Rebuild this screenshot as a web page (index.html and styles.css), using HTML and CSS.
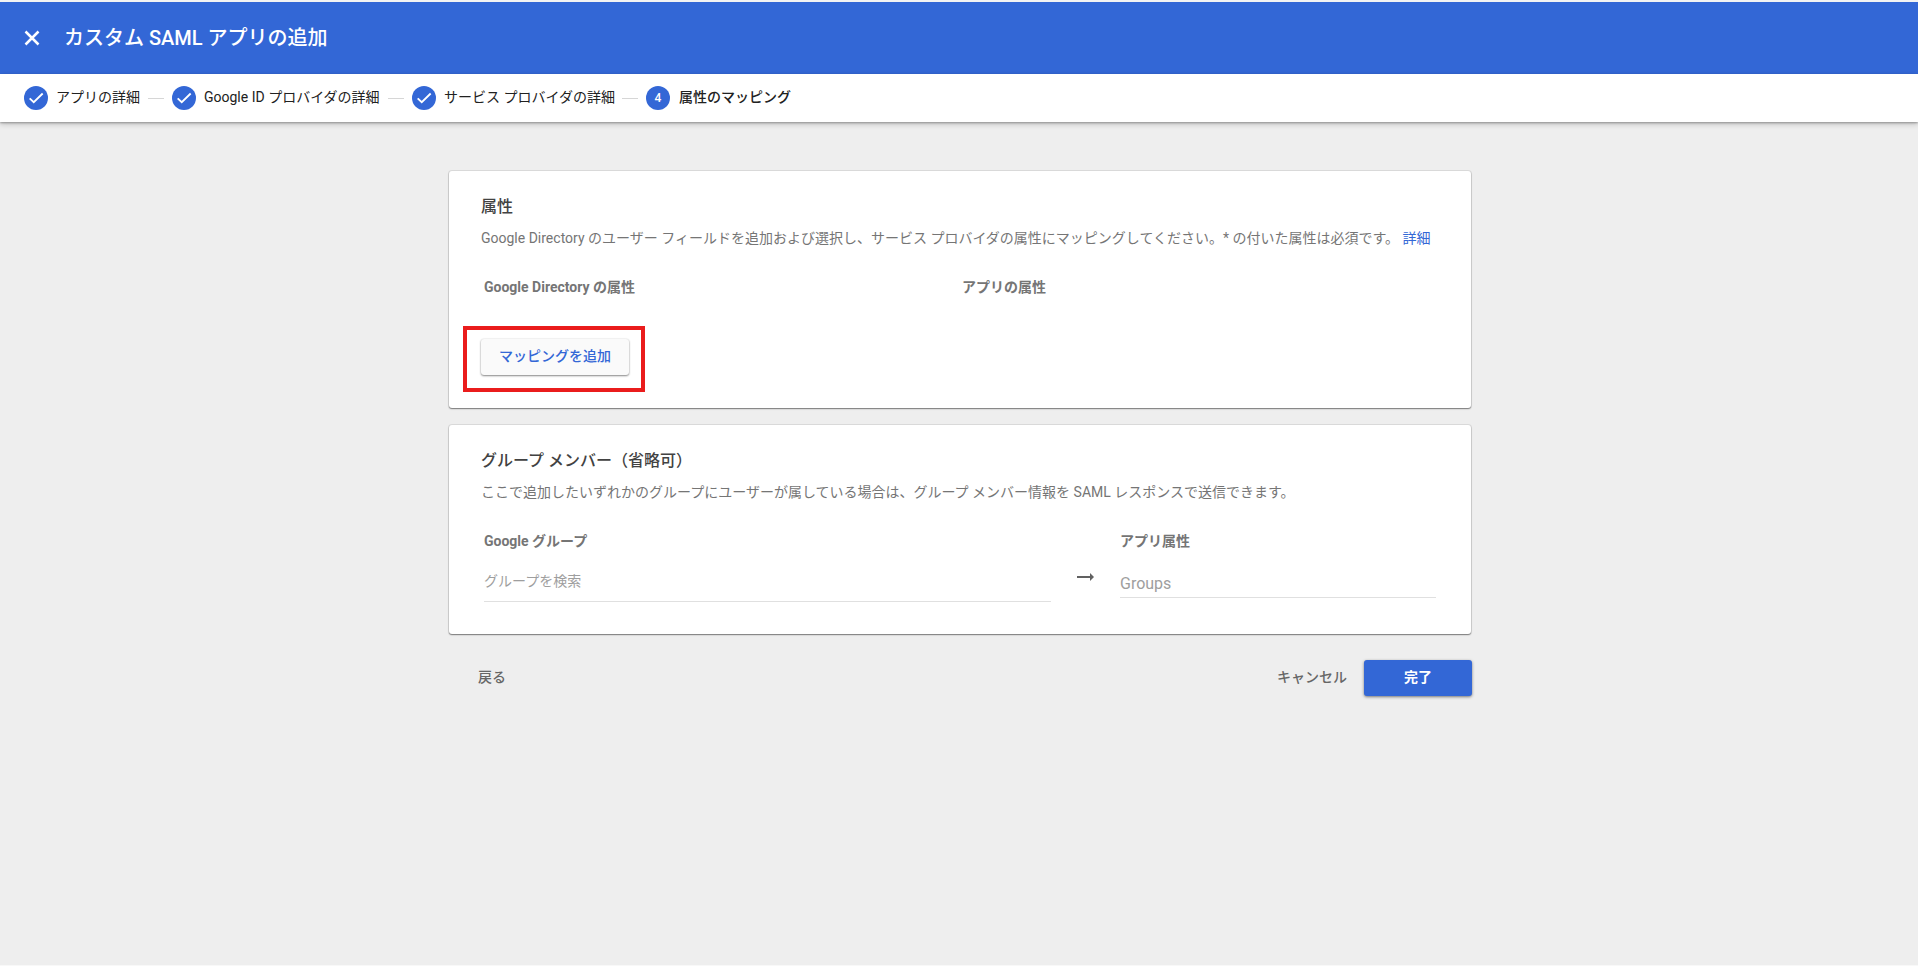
FILE: index.html
```html
<!DOCTYPE html>
<html lang="ja">
<head>
<meta charset="utf-8">
<title>カスタム SAML アプリの追加</title>
<link rel="stylesheet" href="styles.css">
</head>
<body>
<header class="topbar">
  <svg class="close" viewBox="0 0 16 16"><path d="M1.5 1.5l13 13M14.5 1.5l-13 13"/></svg>
  <h1 class="topbar-title">カスタム SAML アプリの追加</h1>
</header>
<nav class="steps">
  <span class="badge"><svg class="check" viewBox="0 0 24 24"><path d="M4.4 12.4l4.9 4.7L20 6.6"/></svg></span>
  <span class="step step-1">アプリの詳細</span>
  <span class="dash"></span>
  <span class="badge"><svg class="check" viewBox="0 0 24 24"><path d="M4.4 12.4l4.9 4.7L20 6.6"/></svg></span>
  <span class="step step-2">Google ID プロバイダの詳細</span>
  <span class="dash"></span>
  <span class="badge"><svg class="check" viewBox="0 0 24 24"><path d="M4.4 12.4l4.9 4.7L20 6.6"/></svg></span>
  <span class="step step-3">サービス プロバイダの詳細</span>
  <span class="dash"></span>
  <span class="badge">4</span>
  <span class="step current">属性のマッピング</span>
</nav>
<main class="content">
  <section class="card attributes">
    <h2 class="card-title">属性</h2>
    <p class="desc">Google Directory のユーザー フィールドを追加および選択し、サービス プロバイダの属性にマッピングしてください。* の付いた属性は必須です。 <a class="link">詳細</a></p>
    <div class="columns">
      <span class="label">Google Directory の属性</span>
      <span class="label">アプリの属性</span>
    </div>
    <div class="highlight"><button class="btn add">マッピングを追加</button></div>
  </section>
  <section class="card groups">
    <h2 class="card-title">グループ メンバー（省略可）</h2>
    <p class="desc">ここで追加したいずれかのグループにユーザーが属している場合は、グループ メンバー情報を SAML レスポンスで送信できます。</p>
    <div class="mapping">
      <div class="field">
        <span class="label">Google グループ</span>
        <div class="input search">グループを検索</div>
      </div>
      <svg class="arrow" viewBox="0 0 17 10"><path d="M0 4h13V1l4 4-4 4V6H0z"/></svg>
      <div class="field">
        <span class="label">アプリ属性</span>
        <div class="input name">Groups</div>
      </div>
    </div>
  </section>
  <footer class="actions">
    <button class="btn text back">戻る</button>
    <button class="btn text cancel">キャンセル</button>
    <button class="btn done">完了</button>
  </footer>
</main>
</body>
</html>
```
FILE: styles.css
```css
* { box-sizing: border-box; }
html { height: 100%; }
body {
  margin: 0;
  height: 966px;
  overflow: hidden;
  background: #eee;
  border-top: 2px solid #f3f3f3;
  border-bottom: 1px solid #f8f8f8;
  font-family: Roboto, "Noto Sans CJK JP", sans-serif;
  font-size: 14px;
  line-height: 20px;
  color: #212121;
}
h1, h2, p { margin: 0; }
.topbar {
  display: flex;
  align-items: center;
  height: 72px;
  padding: 0 24px;
  background: #3367d6;
  color: #fff;
}
.close { width: 16px; height: 16px; fill: none; stroke: #fff; stroke-width: 2.5; }
.topbar-title { margin-left: 24px; font-size: 20px; font-weight: 500; line-height: 28px; }
.steps {
  display: flex;
  align-items: center;
  height: 48px;
  padding-left: 24px;
  background: #fff;
  box-shadow: 0 1px 2px rgba(0, 0, 0, .3), 0 2px 6px rgba(0, 0, 0, .2);
}
.badge {
  display: flex;
  flex: none;
  align-items: center;
  justify-content: center;
  width: 24px;
  height: 24px;
  border-radius: 50%;
  background: #3367d6;
  color: #fff;
  font-size: 12px;
  font-weight: 500;
}
.check { width: 20px; height: 20px; fill: none; stroke: #fff; stroke-width: 2.2; }
.step { margin-left: 8px; padding-bottom: 2px; white-space: nowrap; }
.step-1 { width: 84px; }
.step-2 { width: 176px; }
.step-3 { width: 170px; }
.current { margin-left: 9px; font-weight: 500; }
.dash { width: 16px; height: 1px; margin: 0 8px; background: #d6d6d6; }
.content { width: 1022px; margin: 49px 0 0 449px; }
.card {
  background: #fff;
  border-radius: 3px;
  box-shadow: 0 1px 1px rgba(0, 0, 0, .3), 0 0 0 1px rgba(0, 0, 0, .08), 0 1px 2px rgba(0, 0, 0, .2);
}
.attributes { height: 237px; padding: 24px 32px 0; }
.groups { height: 209px; margin-top: 17px; padding: 24px 32px 0; }
.card-title { font-size: 16px; font-weight: 500; line-height: 24px; color: #424242; }
.desc { margin-top: 9px; color: #757575; white-space: nowrap; }
.link { color: #3367d6; }
.columns { display: grid; grid-template-columns: 478px 1fr; margin: 29px 0 0 3px; }
.label { display: block; font-weight: 700; color: #757575; }
.highlight {
  width: 182px;
  height: 66px;
  margin: 29px 0 0 -18px;
  padding: 9px 14px;
  border: 4px solid #ea1c1c;
}
.btn {
  padding: 0 0 2px;
  border: 0;
  border-radius: 3px;
  font: 500 14px/20px Roboto, "Noto Sans CJK JP", sans-serif;
}
.add {
  width: 148px;
  height: 36px;
  background: #fafafa;
  color: #3367d6;
  box-shadow: 0 1px 2px rgba(0, 0, 0, .45), 0 0 2px rgba(0, 0, 0, .12);
}
.mapping { display: flex; margin: 29px 0 0 3px; }
.field:first-child { width: 567px; }
.field:last-child { width: 316px; }
.arrow { width: 17px; height: 10px; margin: 41px 26px 0; fill: #616161; }
.input { border-bottom: 1px solid #e0e0e0; color: #9e9e9e; }
.search { height: 51px; padding-top: 20px; }
.name { height: 47px; padding-top: 23px; font-size: 16px; }
.actions { display: flex; align-items: center; margin: 26px -1px 0 0; }
.text { background: none; color: #666; }
.back { margin: 0 auto 0 29px; }
.cancel { margin-right: 17px; }
.done {
  width: 108px;
  height: 36px;
  background: #3367d6;
  color: #fff;
  font-weight: 700;
  box-shadow: 0 1px 3px rgba(0, 0, 0, .5);
}
```
